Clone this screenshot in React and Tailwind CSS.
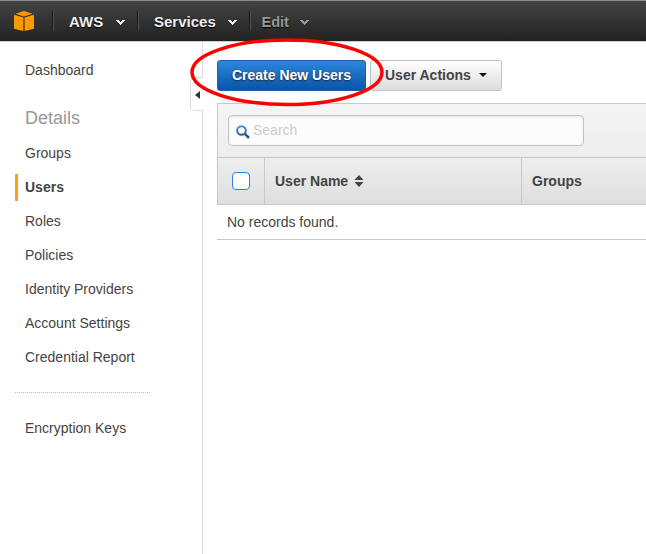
import React from "react";

function Chevron({ color }) {
  return (
    <svg width="9" height="5" viewBox="0 0 9 5" className="mt-[3px] block" shapeRendering="crispEdges">
      <path d="M0 0h3v1h1v1h1v-1h1v-1h3v1h-1v1h-1v1h-1v1h-1v1h-1v-1h-1v-1h-1v-1h-1v-1h-1z" fill={color} />
    </svg>
  );
}

function Divider() {
  return <div className="h-5 w-0.5 shrink-0 border-l border-[#1a1a1a] bg-[#505050]" />;
}

function NavItem({ label, className, color }) {
  return (
    <div className={`flex shrink-0 items-center justify-between ${className}`}>
      <span className="pt-0.5 [text-shadow:0_1px_1px_#000]">{label}</span>
      <Chevron color={color} />
    </div>
  );
}

function TopNav() {
  return (
    <header className="flex h-[42px] items-center border-t border-b border-t-[#8d8d8d] border-b-[#cccccc] bg-linear-to-b from-[#444444] to-[#222222] pl-[14px] text-[15px] font-bold text-[#eeeeee]">
      <svg width="20" height="20" viewBox="0 0 20 20" className="mr-[18px] block shrink-0" fill="#ff9900">
        <path d="M10 0L18.5 2.7L10 5.6L1.500 2.7z" />
        <path d="M0 3.700L9.400 6.600V20L0 17.800z" />
        <path d="M20 3.700L10.600 6.600V20L20 17.800z" />
      </svg>
      <Divider />
      <NavItem label="AWS" className="mr-3 ml-[15px] w-14" color="#eeeeee" />
      <Divider />
      <NavItem label="Services" className="mr-3 ml-[15px] w-[83px]" color="#eeeeee" />
      <Divider />
      <NavItem label="Edit" className="ml-[10.5px] w-[47.5px] text-[14.5px] text-[#999999]" color="#999999" />
    </header>
  );
}

const links = ["Groups", "Users", "Roles", "Policies", "Identity Providers", "Account Settings", "Credential Report"];

function Sidebar() {
  return (
    <aside className="relative w-[203px] shrink-0 border-r border-[#dddddd] pt-[15px] pl-[15px]">
      <div className="h-[27px] pl-[10px] leading-[27px]">Dashboard</div>
      <div className="mt-[21px] h-[27px] pl-[10px] text-lg leading-[27px] text-[#999999]">Details</div>
      <nav className="mt-2 flex flex-col gap-[7px]">
        {links.map((l) => (
          <div
            key={l}
            className={`h-[27px] border-l-3 pl-[7px] leading-[27px] ${l === "Users" ? "border-[#ff9c1a] font-bold" : "border-transparent"}`}
          >
            {l}
          </div>
        ))}
      </nav>
      <div className="mt-[21px] w-[135px] border-t border-dotted border-[#bbbbbb]" />
      <div className="mt-[22px] h-[27px] pl-[10px] leading-[27px]">Encryption Keys</div>
      <div className="absolute top-[35px] -right-px flex h-[34px] w-[13px] items-center rounded-l-[5px] border border-r-0 border-[#dddddd] bg-white pl-1">
        <svg width="5" height="8" viewBox="0 0 5 8" className="mt-px block">
          <path d="M5 0V8L0 4z" fill="#333333" />
        </svg>
      </div>
    </aside>
  );
}

function Actions() {
  return (
    <div className="flex gap-1 font-bold">
      <button className="h-[31px] w-[149px] rounded-[3px] border border-[#1b5fae] bg-linear-to-b from-[#2d86de] to-[#0755a9] pb-px whitespace-nowrap text-white [text-shadow:0_1px_2px_#222]">
        Create New Users
      </button>
      <button className="flex h-[31px] w-[132px] items-center rounded-[3px] border border-[#c0c0c0] bg-linear-to-b from-white to-[#dddddd] pb-px pl-[14px] whitespace-nowrap">
        User Actions
        <svg width="8" height="4" viewBox="0 0 8 4" className="ml-2 block">
          <path d="M0 0H8L4 4z" fill="#111111" />
        </svg>
      </button>
    </div>
  );
}

function UsersTable() {
  return (
    <section className="mt-3 border-t border-[#c8c8c8]">
      <div className="h-[53px] border-l border-[#c8c8c8] bg-linear-to-b from-[#f5f5f5] to-[#ededed] pt-[11px] pl-[10px]">
        <div className="flex h-[31px] w-[356px] items-center rounded-[4px] border border-[#c4c4c4] bg-[#fcfcfc] pl-[7px] text-[#cccccc] shadow-[inset_0_1px_3px_#e4e4e4]">
          <svg width="14" height="14" viewBox="0 0 14 14" className="mt-[3px] mr-[3px] block" fill="none">
            <defs>
              <linearGradient id="lens" x1="0" y1="0" x2="0" y2="14" gradientUnits="userSpaceOnUse">
                <stop stopColor="#3e98dd" />
                <stop offset="1" stopColor="#27498f" />
              </linearGradient>
            </defs>
            <circle cx="5.500" cy="5.500" r="4.300" stroke="url(#lens)" strokeWidth="2" />
            <path d="M8.700 8.700L13 13" stroke="#30599f" strokeWidth="2.600" />
          </svg>
          <span className="-mt-px">Search</span>
        </div>
      </div>
      <div className="flex h-12 border-y border-l border-[#c8c8c8] bg-linear-to-b from-[#eeeeee] to-[#dedede] font-bold">
        <div className="flex w-[47px] shrink-0 items-center border-r border-[#c8c8c8] pl-[14px]">
          <span className="block size-[18px] rounded-[4px] border border-[#2f80d8] bg-white" />
        </div>
        <div className="flex w-[257px] shrink-0 items-center border-r border-[#c8c8c8] pl-[10px]">
          User Name
          <svg width="10" height="12" viewBox="0 0 10 12" className="ml-1.5 block" fill="#444444">
            <path d="M5 0L9.500 5H.5z" />
            <path d="M5 12L.5 7H9.500z" />
          </svg>
        </div>
        <div className="flex items-center pl-[10px]">Groups</div>
      </div>
      <div className="flex h-[35px] items-center border-b border-[#c8c8c8] pl-[10px]">No records found.</div>
    </section>
  );
}

export default function App() {
  return (
    <div className="relative flex h-[554px] w-[646px] flex-col overflow-hidden bg-white font-['Liberation_Sans',Arial,sans-serif] text-sm text-[#444444]">
      <TopNav />
      <div className="flex min-h-0 flex-1">
        <Sidebar />
        <main className="min-w-0 flex-1 pt-[18px] pl-[14px]">
          <Actions />
          <UsersTable />
        </main>
      </div>
      <svg width="196" height="70" viewBox="0 0 196 70" className="pointer-events-none absolute top-[37px] left-[189px]" fill="none">
        <ellipse cx="98" cy="35.200" rx="95" ry="32.300" stroke="#ff0000" strokeWidth="3.500" />
      </svg>
    </div>
  );
}
